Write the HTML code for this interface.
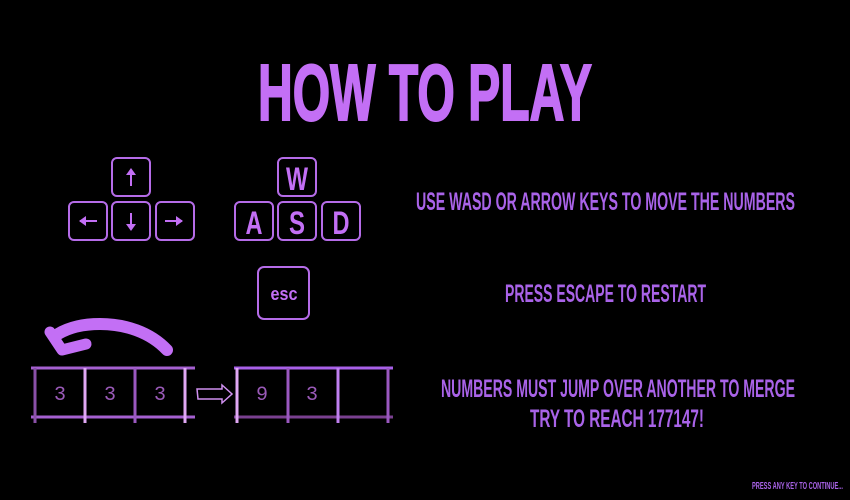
<!DOCTYPE html>
<html><head><meta charset="utf-8"><style>
html,body{margin:0;padding:0;background:#000;width:850px;height:500px;overflow:hidden}
</style></head><body>
<svg width="850" height="500" viewBox="0 0 850 500" xmlns="http://www.w3.org/2000/svg" style="display:block">
<rect width="850" height="500" fill="#000"/>
<g font-family="Liberation Sans, sans-serif" font-weight="bold" fill="#c36ff5">
<text x="258" y="120" font-size="80" textLength="334" lengthAdjust="spacingAndGlyphs" stroke="#c36ff5" stroke-width="2">HOW TO PLAY</text>
</g>
<g font-family="Liberation Sans, sans-serif" font-weight="bold" fill="#a963e8">
<text x="416" y="210" font-size="25" textLength="379" lengthAdjust="spacingAndGlyphs">USE WASD OR ARROW KEYS TO MOVE THE NUMBERS</text>
<text x="505" y="302" font-size="25" textLength="201" lengthAdjust="spacingAndGlyphs">PRESS ESCAPE TO RESTART</text>
<text x="441" y="397" font-size="25" textLength="354" lengthAdjust="spacingAndGlyphs">NUMBERS MUST JUMP OVER ANOTHER TO MERGE</text>
<text x="530" y="427" font-size="25" textLength="174" lengthAdjust="spacingAndGlyphs">TRY TO REACH 177147!</text>
<text x="752" y="489" font-size="10" textLength="91" lengthAdjust="spacingAndGlyphs">PRESS ANY KEY TO CONTINUE...</text>
</g>
<g fill="none" stroke="#b56ce8" stroke-width="2">
<rect x="112" y="158" width="38" height="38" rx="5"/>
<rect x="69" y="202" width="38" height="38" rx="5"/>
<rect x="112" y="202" width="38" height="38" rx="5"/>
<rect x="156" y="202" width="38" height="38" rx="5"/>
<rect x="278" y="158" width="38" height="38" rx="5"/>
<rect x="235" y="202" width="38" height="38" rx="5"/>
<rect x="278" y="202" width="38" height="38" rx="5"/>
<rect x="322" y="202" width="38" height="38" rx="5"/>
<rect x="258" y="267" width="51" height="52" rx="6"/>
</g>
<g stroke="#c36ff5" stroke-width="2" fill="#c36ff5">
<line x1="131" y1="170" x2="131" y2="186"/><path d="M126,175 L131,168 L136,175Z" stroke="none"/>
<line x1="131" y1="213" x2="131" y2="229"/><path d="M126,224 L131,231 L136,224Z" stroke="none"/>
<line x1="80" y1="221" x2="97" y2="221"/><path d="M86,216 L79,221 L86,226Z" stroke="none"/>
<line x1="165" y1="221" x2="182" y2="221"/><path d="M176,216 L183,221 L176,226Z" stroke="none"/>
</g>
<g font-family="Liberation Sans, sans-serif" font-weight="bold" fill="#c36ff5">
<text x="297" y="190" font-size="32" text-anchor="middle" textLength="22" lengthAdjust="spacingAndGlyphs">W</text>
<text x="254" y="234" font-size="32" text-anchor="middle" textLength="17" lengthAdjust="spacingAndGlyphs">A</text>
<text x="297" y="234" font-size="32" text-anchor="middle" textLength="16" lengthAdjust="spacingAndGlyphs">S</text>
<text x="341" y="234" font-size="32" text-anchor="middle" textLength="17" lengthAdjust="spacingAndGlyphs">D</text>
<text x="284" y="300" font-size="18" text-anchor="middle" textLength="27" lengthAdjust="spacingAndGlyphs">esc</text>
</g>
<path d="M167,350 C150,332 125,324 100,324 C82,324 68,328 58,334" fill="none" stroke="#c36ff5" stroke-width="12" stroke-linecap="round" stroke-linejoin="round"/>
<path d="M50,332 L62,350 L86,344" fill="none" stroke="#c36ff5" stroke-width="11" stroke-linecap="round" stroke-linejoin="round"/>
<g stroke-width="3">
<line x1="31" y1="368" x2="195" y2="368" stroke="#a560d0"/>
<line x1="31" y1="417" x2="195" y2="417" stroke="#a560d0"/>
<line x1="35" y1="368" x2="35" y2="423" stroke="#8a50a8"/>
<line x1="85" y1="368" x2="85" y2="423" stroke="#e0a8f5"/>
<line x1="135" y1="368" x2="135" y2="423" stroke="#9a58c0"/>
<line x1="185" y1="368" x2="185" y2="423" stroke="#e0a8f5"/>
<line x1="234" y1="368" x2="393" y2="368" stroke="#a860e8"/>
<line x1="234" y1="417" x2="393" y2="417" stroke="#7a4090"/>
<line x1="237" y1="368" x2="237" y2="423" stroke="#e0a8f5"/>
<line x1="288" y1="368" x2="288" y2="423" stroke="#9a58c0"/>
<line x1="338" y1="368" x2="338" y2="423" stroke="#c080f0"/>
<line x1="388" y1="368" x2="388" y2="423" stroke="#9a58c0"/>
</g>
<g font-family="Liberation Mono, monospace" font-size="20" fill="#9a5ab8" text-anchor="middle">
<text x="60" y="400">3</text><text x="110" y="400">3</text><text x="160" y="400">3</text>
<text x="262" y="400">9</text><text x="312" y="400">3</text>
</g>
<path d="M197,389 L222,389 L222,385 L232,394 L222,403 L222,399 L198,399 Z" fill="none" stroke="#d090f0" stroke-width="1.5"/>
</svg>
</body></html>
